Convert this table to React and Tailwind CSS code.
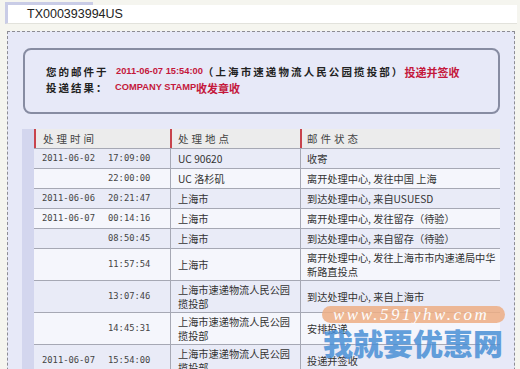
import React from 'react';

const rows = [
  { date: '2011-06-02', time: '17:09:00', place: ['UC 90620'], status: ['收寄'] },
  { date: '', time: '22:00:00', place: ['UC 洛杉矶'], status: ['离开处理中心, 发往中国 上海'] },
  { date: '2011-06-06', time: '20:21:47', place: ['上海市'], status: ['到达处理中心, 来自USUESD'] },
  { date: '2011-06-07', time: '00:14:16', place: ['上海市'], status: ['离开处理中心, 发往留存（待验）'] },
  { date: '', time: '08:50:45', place: ['上海市'], status: ['到达处理中心, 来自留存（待验）'] },
  { date: '', time: '11:57:54', place: ['上海市'], status: ['离开处理中心, 发往上海市市内速递局中华', '新路直投点'], tall: true },
  { date: '', time: '13:07:46', place: ['上海市速递物流人民公园', '揽投部'], status: ['到达处理中心, 来自上海市'], tall: true },
  { date: '', time: '14:45:31', place: ['上海市速递物流人民公园', '揽投部'], status: ['安排投递'], tall: true },
  { date: '2011-06-07', time: '15:54:00', place: ['上海市速递物流人民公园', '揽投部'], status: ['投递并签收'], tall: true },
];

const cjk = { fontFamily: '"Noto Sans CJK SC", "Liberation Sans", sans-serif' };
const mono = { fontFamily: '"DejaVu Sans Mono", "Liberation Mono", monospace' };
const arial = { fontFamily: '"Liberation Sans", Arial, sans-serif' };

const Lines = ({ lines }) => (
  <div className="leading-[14px]">
    {lines.map((l, i) => (
      <div key={i}>{l}</div>
    ))}
  </div>
);

export default function App() {
  return (
    <div className="relative w-[520px] h-[369px] overflow-hidden bg-[#f5f5ef]" style={cjk}>
      {/* Tracking number bar */}
      <div className="ml-[5px] pt-[2px] w-[512px]">
        <div className="w-[88px] h-[3px] bg-[#c9cce6]" />
        <div className="h-[19px] border-l-[3px] border-[#c9cce6] bg-white border-b border-b-[#e2e2dc] flex items-center pl-[19px]">
          <span className="text-[12.5px] text-[#222]" style={arial}>TX000393994US</span>
        </div>
      </div>

      {/* Main panel */}
      <div className="mt-[7px] ml-[7px] w-[508px] h-[400px] border border-dashed border-[#8c8c94] bg-[#e7e9f8]">
        {/* Summary box */}
        <div className="mt-[16px] ml-[15px] w-[477px] h-[66px] rounded-[8px] border-2 border-[#878ca2] pt-[14px] pl-[21px]">
          <div className="flex items-center h-[16px] whitespace-nowrap">
            <span className="w-[70px] text-[10.5px] font-bold tracking-[2px] text-[#222]">您的邮件于</span>
            <span className="text-[9.3px] font-bold text-[#c4183c]" style={arial}>2011-06-07 15:54:00</span>
            <span className="text-[10.5px] font-bold tracking-[2.1px] text-[#222]">（上海市速递物流人民公园揽投部）</span>
            <span className="text-[11px] font-bold text-[#c4183c]">投递并签收</span>
          </div>
          <div className="flex items-center h-[16px] whitespace-nowrap">
            <span className="w-[69px] text-[10.5px] font-bold tracking-[2px] text-[#222]">投递结果：</span>
            <span className="text-[9.3px] font-bold text-[#c4183c]" style={arial}>COMPANY STAMP</span>
            <span className="text-[11px] font-bold text-[#c4183c]">收发章收</span>
          </div>
        </div>

        {/* Detail table */}
        <div className="mt-[15px] ml-[14px] w-[478px] pl-[12px] bg-[#d3d6ee] h-[260px]">
          <div className="bg-[#eef0fa]">
            <div className="grid grid-cols-[136px_130px_200px] h-[20px] bg-[#ececec] border-b border-[#a6a8b4] text-[10.5px] text-[#444]">
              <div className="flex items-center pl-[7px] border-l-2 border-[#c8444c] tracking-[3px]">处理时间</div>
              <div className="flex items-center pl-[6px] border-l-2 border-[#c8444c] tracking-[3px]">处理地点</div>
              <div className="flex items-center pl-[5px] border-l-2 border-[#c8444c] tracking-[3px]">邮件状态</div>
            </div>
            {rows.map((r, i) => (
              <div
                key={i}
                className={`grid grid-cols-[136px_130px_200px] border-b border-[#a6a8b4] text-[10.2px] text-[#333] ${r.tall ? 'h-[32px]' : 'h-[20px]'} ${i % 2 === 0 ? 'bg-[#e9ebf7]' : 'bg-[#f5f6fc]'}`}
              >
                <div className="flex items-center pl-[8px] text-[8.8px] text-[#444]" style={mono}>
                  <span className="w-[66px]">{r.date}</span>
                  <span>{r.time}</span>
                </div>
                <div className="flex items-center pl-[7px] border-l border-[#a6a8b4]">
                  <Lines lines={r.place} />
                </div>
                <div className="flex items-center pl-[6px] border-l border-[#a6a8b4] whitespace-nowrap">
                  <Lines lines={r.status} />
                </div>
              </div>
            ))}
          </div>
        </div>
      </div>

      {/* Watermark */}
      <div className="absolute left-[322px] top-[306px] w-[183px] h-[17px] rounded-full bg-[#eeae84] opacity-85 flex items-center pl-[11px]">
        <span className="text-white italic text-[17px] tracking-[2.5px] leading-none" style={{ fontFamily: '"Liberation Serif", serif' }}>
          www.591yhw.com
        </span>
      </div>
      <div className="absolute left-[323px] top-[323px] text-[30px] leading-[38px] font-black text-[#4a90d6] opacity-85 whitespace-nowrap">
        我就要优惠网
      </div>
    </div>
  );
}
